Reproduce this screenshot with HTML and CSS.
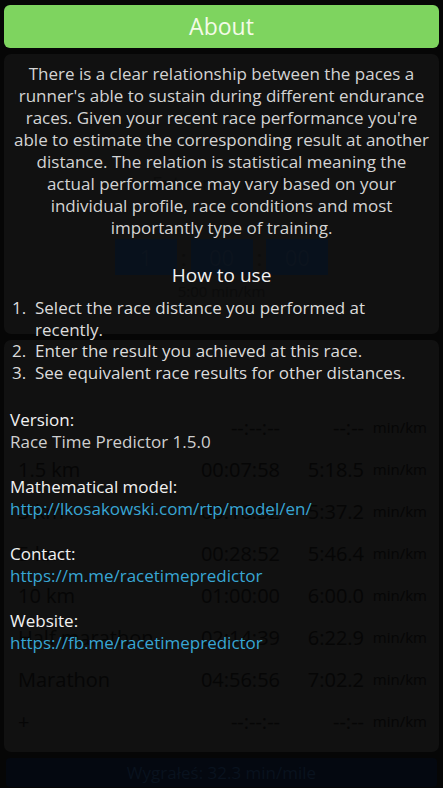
FILE: index.html
```html
<!DOCTYPE html>
<html>
<head>
<meta charset="utf-8">
<link rel="stylesheet" href="styles.css">
</head>
<body>
<div class="app">
  <div class="card card-top">
    <div class="ghost-label">Enter race result</div>
    <div class="ghost-time">
      <span class="tbox">1</span><span class="sep">:</span><span class="tbox">00</span><span class="sep">:</span><span class="tbox">00</span>
    </div>
    <div class="ghost-label small">5:00 min/km</div>
  </div>
  <div class="card card-table">
    <div class="grow"><span class="gname"></span><span class="gtime">--:--:--</span><span class="gpace">--:--</span><span class="gunit">min/km</span></div>
    <div class="grow"><span class="gname">1.5 km</span><span class="gtime">00:07:58</span><span class="gpace">5:18.5</span><span class="gunit">min/km</span></div>
    <div class="grow"><span class="gname">3 km</span><span class="gtime">00:16:52</span><span class="gpace">5:37.2</span><span class="gunit">min/km</span></div>
    <div class="grow"><span class="gname">5 km</span><span class="gtime">00:28:52</span><span class="gpace">5:46.4</span><span class="gunit">min/km</span></div>
    <div class="grow"><span class="gname">10 km</span><span class="gtime">01:00:00</span><span class="gpace">6:00.0</span><span class="gunit">min/km</span></div>
    <div class="grow"><span class="gname">Half marathon</span><span class="gtime">02:14:39</span><span class="gpace">6:22.9</span><span class="gunit">min/km</span></div>
    <div class="grow"><span class="gname">Marathon</span><span class="gtime">04:56:56</span><span class="gpace">7:02.2</span><span class="gunit">min/km</span></div>
    <div class="grow"><span class="gname">+</span><span class="gtime">--:--:--</span><span class="gpace">--:--</span><span class="gunit">min/km</span></div>
  </div>
  <div class="ghost-button">Wygrałeś: 32.3 min/mile</div>
</div>

<div class="dialog">
  <div class="dialog-title">About</div>
  <div class="dialog-body">
    <p class="intro">There is a clear relationship between the paces a runner's able to sustain during different endurance races. Given your recent race performance you're able to estimate the corresponding result at another distance. The relation is statistical meaning the<br>actual performance may vary based on your individual profile, race conditions and most importantly type of training.</p>
    <h2 class="howto">How to use</h2>
    <ol class="steps">
      <li><span class="num">1.</span><span>Select the race distance you performed at recently.</span></li>
      <li><span class="num">2.</span><span>Enter the result you achieved at this race.</span></li>
      <li><span class="num">3.</span><span>See equivalent race results for other distances.</span></li>
    </ol>
    <div class="info">
      <div class="info-group">
        <div class="info-label">Version:</div>
        <div class="info-value">Race Time Predictor 1.5.0</div>
      </div>
      <div class="info-group">
        <div class="info-label">Mathematical model:</div>
        <a class="info-link">http://lkosakowski.com/rtp/model/en/</a>
      </div>
      <div class="info-group">
        <div class="info-label">Contact:</div>
        <a class="info-link">https://m.me/racetimepredictor</a>
      </div>
      <div class="info-group">
        <div class="info-label">Website:</div>
        <a class="info-link">https://fb.me/racetimepredictor</a>
      </div>
    </div>
  </div>
</div>
</body>
</html>
```
FILE: styles.css
```css
* { box-sizing: border-box; }
html, body {
  margin: 0;
  padding: 0;
  width: 443px;
  height: 788px;
  overflow: hidden;
  background: #060606;
  font-family: "Open Sans", "Noto Sans", sans-serif;
}
.app {
  display: flex;
  flex-direction: column;
  gap: 6px;
  padding: 54px 4px 0 4px;
  height: 788px;
}
.card {
  background: #111111;
  border-radius: 7px;
}
.card-top {
  height: 280px;
  display: flex;
  flex-direction: column;
  align-items: center;
  padding-top: 74px;
}
.ghost-label {
  color: #0c0c0c;
  font-size: 18px;
  height: 110px;
  display: flex;
  align-items: center;
}
.ghost-label.small { height: 30px; font-size: 15px; }
.ghost-time {
  display: flex;
  align-items: center;
  gap: 4px;
  height: 38px;
}
.tbox {
  background: #08111c;
  color: #0c141e;
  width: 62px;
  height: 36px;
  display: flex;
  align-items: center;
  justify-content: center;
  font-size: 22px;
}
.sep { color: #0d0d0d; font-size: 22px; }
.card-table {
  height: 412px;
  padding: 66px 10px 0 14px;
  display: flex;
  flex-direction: column;
}
.grow {
  display: flex;
  align-items: center;
  height: 42px;
  font-size: 20px;
  color: #060606;
}
.gname { width: 170px; }
.gtime { width: 92px; text-align: right; }
.gpace { width: 84px; text-align: right; }
.gunit { flex: 1; text-align: right; font-size: 15px; padding-right: 2px; }
.ghost-button {
  height: 29px;
  margin: 0 2px;
  background: #040810;
  border-radius: 4px;
  color: #09121e;
  font-size: 17px;
  text-align: center;
  line-height: 29px;
}

.dialog {
  position: absolute;
  left: 0;
  top: 0;
  width: 443px;
  padding: 5px 4px 0 4px;
}
.dialog-title {
  height: 43px;
  background: #7ed45f;
  border-radius: 6px;
  color: #f4fbe8;
  font-size: 23px;
  text-align: center;
  line-height: 43px;
}
.dialog-body {
  padding: 15px 6px 0 6px;
}
.intro {
  margin: 0;
  color: #d4d4d4;
  font-size: 17px;
  line-height: 22px;
  text-align: center;
}
.howto {
  margin: 23px 0 0 0;
  font-weight: normal;
  color: #f2f2f2;
  font-size: 19px;
  line-height: 26px;
  text-align: center;
}
.steps {
  list-style: none;
  margin: 9px 0 0 0;
  padding: 0 0 0 2px;
  display: flex;
  flex-direction: column;
}
.steps li {
  display: flex;
  gap: 6px;
  color: #dcdcdc;
  font-size: 17px;
  line-height: 21.5px;
}
.num { width: 17px; flex: none; }
.info {
  margin-top: 26px;
  display: flex;
  flex-direction: column;
  gap: 23px;
}
.info-group {
  display: flex;
  flex-direction: column;
}
.info-label {
  color: #f2f2f2;
  font-size: 17px;
  line-height: 22px;
}
.info-value {
  color: #cfcfcf;
  font-size: 17px;
  line-height: 22px;
}
.info-link {
  color: #38a6d4;
  font-size: 17px;
  line-height: 22px;
  text-decoration: none;
}
```
